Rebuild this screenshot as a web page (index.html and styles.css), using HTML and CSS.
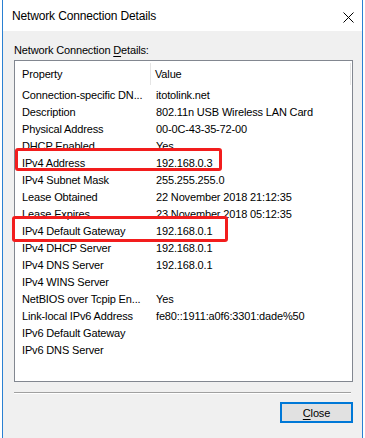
FILE: index.html
```html
<!DOCTYPE html>
<html lang="en">

<head>
    <meta charset="utf-8">
    <meta name="viewport" content="width=device-width, initial-scale=1.0">
    <title>Network Connection Details</title>
    <link rel="stylesheet" href="styles.css">
</head>

<body>
    <div class="window">
        <div class="titlebar">
            <span class="title">Network Connection Details</span>
            <button type="button" class="title-close" aria-label="Close">
                <svg width="11" height="11" viewBox="0 0 11 11">
                    <path d="M0.5 0.5 L10.5 10.5 M10.5 0.5 L0.5 10.5" stroke="#000" stroke-width="1" fill="none" />
                </svg>
            </button>
        </div>

        <div class="dialog">
            <div class="label">Network Connection <u>D</u>etails:</div>

            <div class="listview">
                <div class="lv-header">
                    <div class="lv-col col-prop">Property</div>
                    <div class="lv-col col-value">Value</div>
                </div>

                <div class="lv-rows" id="rows"></div>

                <!-- red annotation boxes -->
                <div class="mark mark-address"></div>
                <div class="mark mark-gateway"></div>
            </div>

            <div class="separator"></div>

            <div class="actions">
                <button type="button" class="btn-close"><u>C</u>lose</button>
            </div>
        </div>
    </div>

    <script>
        const details = [
            ['Connection-specific DN...', 'itotolink.net'],
            ['Description', '802.11n USB Wireless LAN Card'],
            ['Physical Address', '00-0C-43-35-72-00'],
            ['DHCP Enabled', 'Yes'],
            ['IPv4 Address', '192.168.0.3'],
            ['IPv4 Subnet Mask', '255.255.255.0'],
            ['Lease Obtained', '22 November 2018 21:12:35'],
            ['Lease Expires', '23 November 2018 05:12:35'],
            ['IPv4 Default Gateway', '192.168.0.1'],
            ['IPv4 DHCP Server', '192.168.0.1'],
            ['IPv4 DNS Server', '192.168.0.1'],
            ['IPv4 WINS Server', ''],
            ['NetBIOS over Tcpip En...', 'Yes'],
            ['Link-local IPv6 Address', 'fe80::1911:a0f6:3301:dade%50'],
            ['IPv6 Default Gateway', ''],
            ['IPv6 DNS Server', '']
        ];

        const rows = document.getElementById('rows');
        details.forEach(([prop, value]) => {
            const row = document.createElement('div');
            row.className = 'lv-row';
            row.innerHTML = `<span class="cell-prop">${prop}</span><span class="cell-value">${value}</span>`;
            rows.appendChild(row);
        });
    </script>
</body>

</html>
```

FILE: styles.css
```css
* {
    margin: 0;
    padding: 0;
    box-sizing: border-box;
}

body {
    font-family: 'Liberation Sans', Arial, sans-serif;
    font-size: 11px;
    letter-spacing: -0.15px;
    color: #000000;
    background: #ffffff;
    height: 438px;
    overflow: hidden;
}

.window {
    margin-left: 2px;
    width: 361px;
    height: 438px;
    border-left: 1px solid #2a80d2;
    border-right: 1px solid #2a80d2;
    background: #f0f0f0;
}

.titlebar {
    height: 31px;
    background: #ffffff;
    display: flex;
    align-items: flex-start;
    justify-content: space-between;
    padding: 9px 0 0 9px;
}

.title {
    font-size: 12px;
    line-height: 15px;
}

.title-close {
    border: none;
    background: none;
    width: 11px;
    height: 11px;
    margin: 3px 8px 0 0;
    display: flex;
}

.dialog {
    padding: 0 9px 0 11px;
}

.label {
    line-height: 13px;
    padding-top: 13px;
    margin-bottom: 3px;
}

.label u,
.btn-close u {
    text-decoration-thickness: 1px;
    text-underline-offset: 2px;
}

.listview {
    position: relative;
    height: 322px;
    border: 1px solid #828790;
    background: #ffffff;
}

.lv-header {
    display: flex;
    height: 26px;
    padding-top: 2px;
    line-height: 22px;
}

.lv-col {
    border-right: 1px solid #e5e5e5;
    height: 22px;
}

.col-prop {
    width: 136px;
    padding-left: 7px;
}

.col-value {
    width: 200px;
    padding-left: 4px;
}

.lv-row {
    display: flex;
    height: 17px;
    line-height: 17px;
    white-space: nowrap;
}

.cell-prop {
    width: 136px;
    padding-left: 7px;
}

.cell-value {
    padding-left: 5px;
}

.mark {
    position: absolute;
    border: 3px solid #f21d1d;
    border-radius: 3px;
}

.mark-address {
    left: 0;
    top: 87px;
    width: 207px;
    height: 23px;
}

.mark-gateway {
    left: -3px;
    top: 155px;
    width: 216px;
    height: 26px;
}

.separator {
    margin: 10px 2px 0 0;
    height: 2px;
    border-top: 1px solid #a0a0a0;
    border-bottom: 1px solid #ffffff;
}

.actions {
    display: flex;
    justify-content: flex-end;
    padding-top: 8px;
}

.btn-close {
    width: 73px;
    height: 21px;
    border: 2px solid #0078d7;
    background: #e1e1e1;
    font-family: inherit;
    font-size: 11px;
    letter-spacing: inherit;
    color: #000000;
}
```
